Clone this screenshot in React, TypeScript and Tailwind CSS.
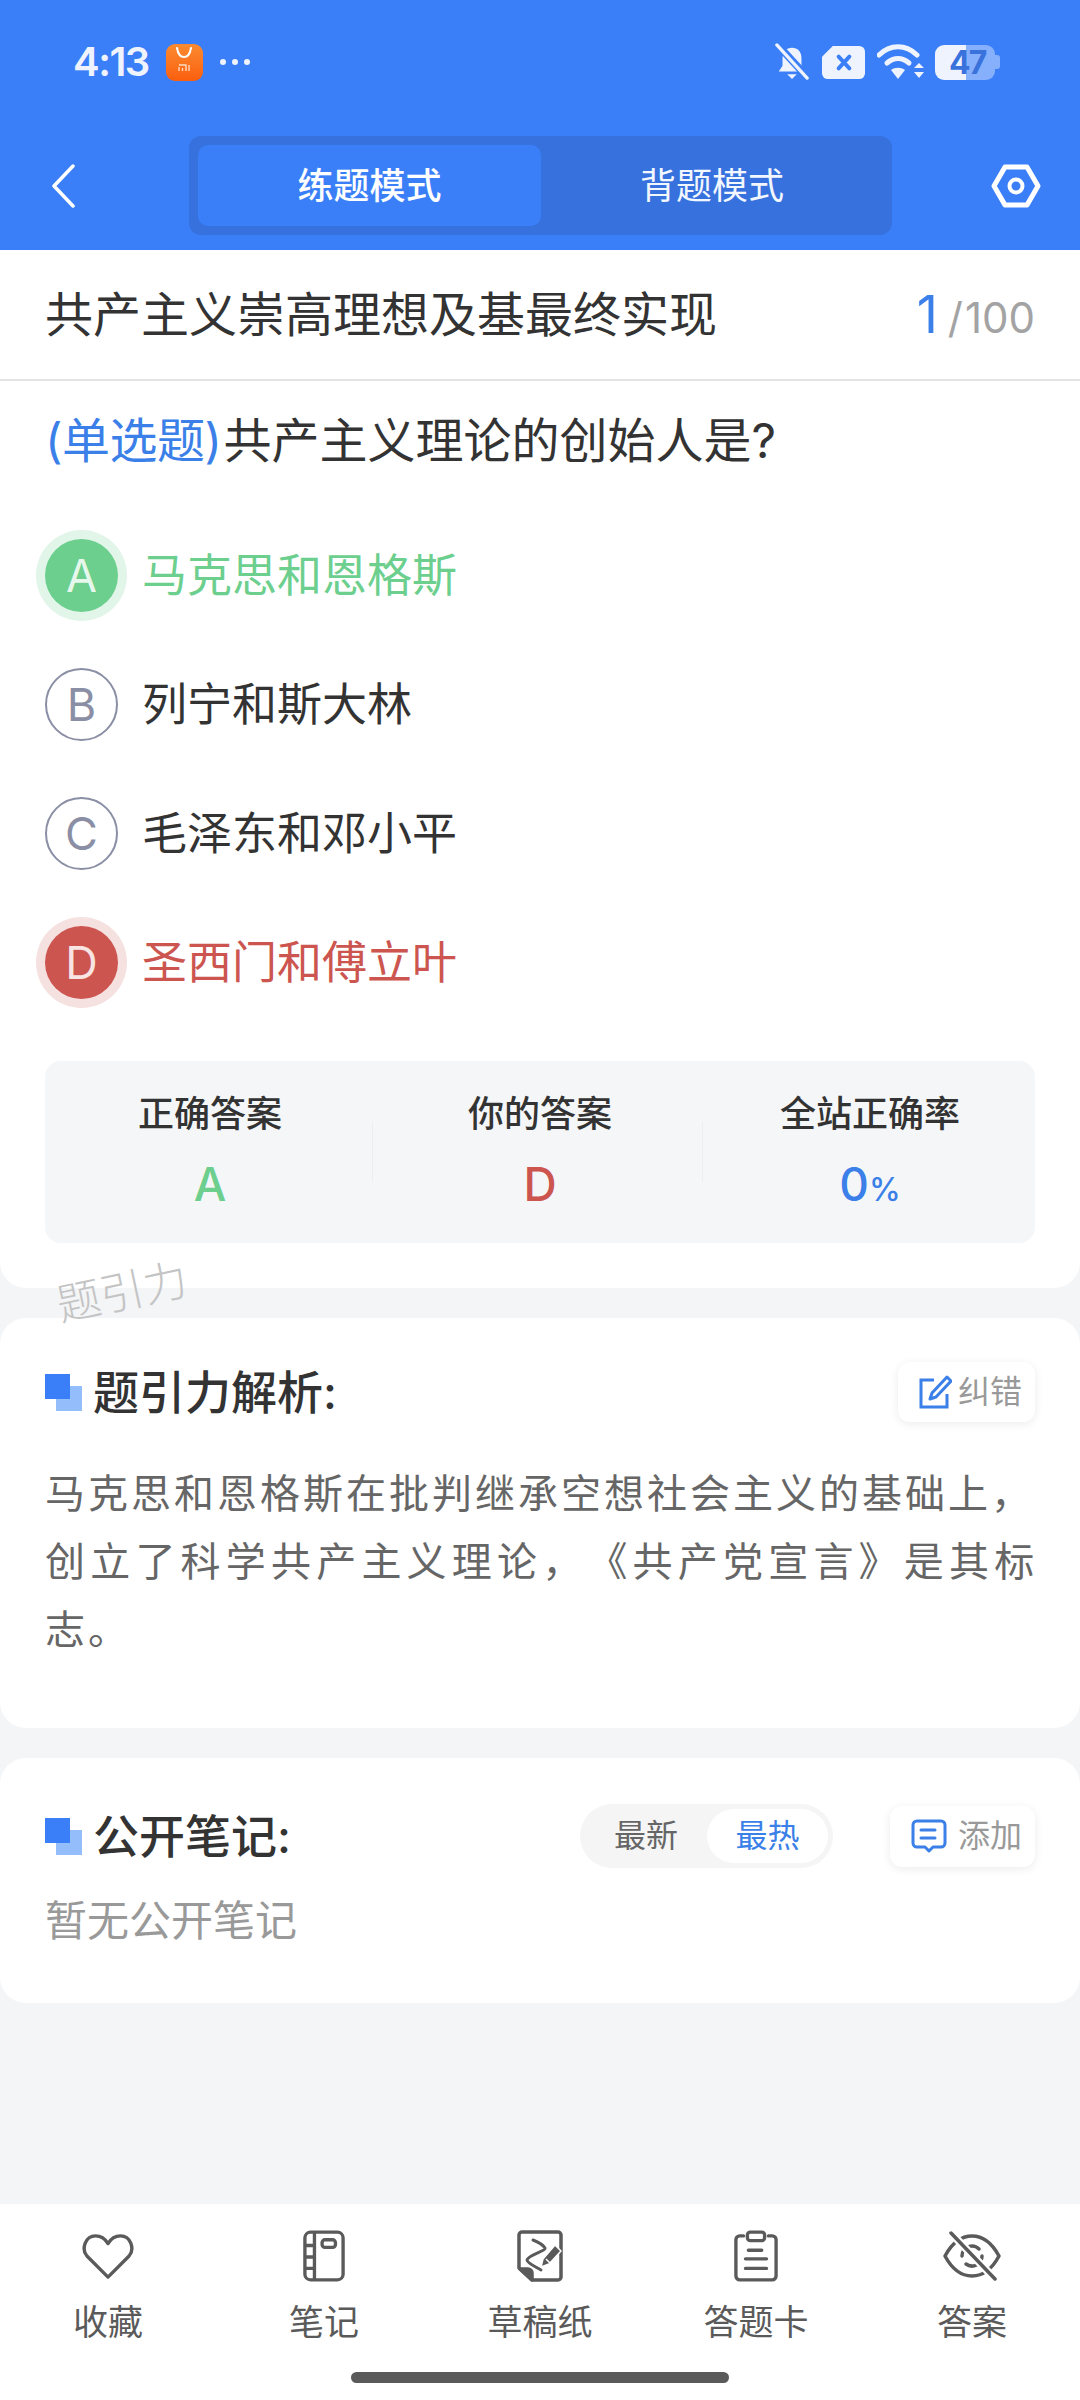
import React from 'react';

const font = "font-['Inter','Noto_Sans_CJK_SC',sans-serif]";

const SectionMark = () => (
  <div className="relative w-[37px] h-[37px] shrink-0">
    <div className="absolute left-[11px] top-[12px] w-[26px] h-[25px] bg-[#93bdfb]" />
    <div className="absolute left-0 top-0 w-[25px] h-[25px] bg-[#3b7ff8]" />
  </div>
);

const Option = ({ letter, text, state }: { letter: string; text: string; state?: 'right' | 'wrong' }) => {
  const circle =
    state === 'right'
      ? 'bg-[#6ccf8e] text-[#e6f7ec] ring-[9px] ring-[#e2f5e9]'
      : state === 'wrong'
        ? 'bg-[#cc5550] text-[#f8e4e3] ring-[9px] ring-[#f5e1e0]'
        : 'border-2 border-[#8b8fa5] text-[#8b8fa5]';
  const label = state === 'right' ? 'text-[#6ccf8e]' : state === 'wrong' ? 'text-[#cc5550]' : 'text-[#333333]';
  return (
    <div className="flex items-center h-[129px]">
      <div className={`w-[73px] h-[73px] rounded-full flex items-center justify-center text-[45px] font-normal ${circle}`}>
        {letter}
      </div>
      <span className={`ml-[24px] text-[45px] leading-none ${label}`}>{text}</span>
    </div>
  );
};

const Stat = ({ label, children, divider }: { label: string; children: React.ReactNode; divider?: boolean }) => (
  <div className="relative flex-1 flex flex-col items-center">
    <span className="text-[36px] leading-[44px] font-medium text-[#333333]">{label}</span>
    <span className="mt-[26px] h-[44px] leading-[44px] font-medium">{children}</span>
    {divider && <div className="absolute right-[2px] top-[30px] h-[60px] w-px bg-[#eceef1]" />}
  </div>
);

const NavItem = ({ icon, label }: { icon: React.ReactNode; label: string }) => (
  <div className="flex-1 flex flex-col items-center">
    <div className="h-[52px] flex items-center justify-center">{icon}</div>
    <span className="mt-[18px] text-[35px] leading-[44px] text-[#5a5a5a]">{label}</span>
  </div>
);

export default function App() {
  return (
    <div className={`${font} w-[1080px] h-[2400px] flex flex-col bg-[#f4f5f7] overflow-hidden`}>
      {/* Header */}
      <header className="h-[250px] shrink-0 bg-[#3b7ff8]">
        <div className="h-[124px] flex items-center pl-[73px] pr-[80px]">
          <span className="text-[40px] font-semibold text-[#eef3fe] tracking-[-1.500px]">4:13</span>
          <div className="ml-[17px] w-[37px] h-[37px] rounded-[9px] bg-gradient-to-b from-[#fb8a2e] to-[#fb5e0c] flex flex-col items-center">
            <svg width="26" height="14" viewBox="0 0 26 14" fill="none" className="mt-[3px]">
              <path d="M6 1c1 6 4 9 7 9s6-3 7-9" stroke="#fff" strokeWidth="2" strokeLinecap="round" />
            </svg>
            <svg width="12" height="8" viewBox="0 0 12 8" fill="none" className="mt-[3px]">
              <path d="M1 1h7v6M4.500 4v3M1 3v4M11 1v6" stroke="#fde0c8" strokeWidth="1.300" />
            </svg>
          </div>
          <div className="ml-[17px] flex gap-[6px]">
            <div className="w-[6px] h-[6px] rounded-full bg-[#eef3fe]" />
            <div className="w-[6px] h-[6px] rounded-full bg-[#eef3fe]" />
            <div className="w-[6px] h-[6px] rounded-full bg-[#eef3fe]" />
          </div>
          <div className="flex-1" />
          <svg width="36" height="38" viewBox="0 0 38 38" fill="#eef3fe">
            <path d="M19 4c6 0 10 4 10 11v8l4 6H5l4-6v-8c0-7 4-11 10-11z" />
            <path d="M14 32h10l-5 5z" />
            <path d="M3 0l34 37" stroke="#3b7ff8" strokeWidth="8" />
            <path d="M3 1l32 35" stroke="#eef3fe" strokeWidth="3.500" strokeLinecap="round" />
          </svg>
          <svg width="43" height="35" viewBox="0 0 44 34" className="ml-[12px]">
            <path d="M11 0h27a6 6 0 0 1 6 6v22a6 6 0 0 1-6 6H6a6 6 0 0 1-6-6V11z" fill="#eef3fe" />
            <path d="M17 11l11 12M28 11L17 23" stroke="#3b7ff8" strokeWidth="4" strokeLinecap="round" />
          </svg>
          <svg width="48" height="36" viewBox="0 0 48 36" fill="none" className="ml-[12px]">
            <path d="M2 11c11-11 27-11 38 0" stroke="#eef3fe" strokeWidth="5" strokeLinecap="round" />
            <path d="M10 19c7-6 15-6 22 0" stroke="#eef3fe" strokeWidth="5" strokeLinecap="round" />
            <path d="M14 26c4-3 10-3 14 0l-7 9z" fill="#eef3fe" />
            <path d="M37 24l5-5 5 5zM37 28l5 6 5-6z" fill="#eef3fe" />
          </svg>
          <div className="relative ml-[10px] w-[65px] h-[35px] flex">
            <div className="w-[31px] h-full rounded-l-[9px] bg-[#eef3fe]" />
            <div className="w-[29px] h-full rounded-r-[9px] bg-[#86b0fb]" />
            <div className="w-[5px] h-[14px] mt-[10px] rounded-r-[3px] bg-[#86b0fb]" />
            <span className="absolute left-[14px] top-0 text-[32px] leading-[35px] font-bold tracking-[-2px] text-[#3a72dc]">47</span>
          </div>
        </div>

        <div className="mt-[12px] flex items-center">
          <div className="w-[189px] pl-[51px]">
            <svg width="24" height="44" viewBox="0 0 24 44" fill="none">
              <path d="M22 2L3 22l19 20" stroke="#fff" strokeWidth="3.500" strokeLinecap="round" strokeLinejoin="round" />
            </svg>
          </div>
          <div className="w-[703px] h-[99px] rounded-[12px] bg-[#3671dd] p-[9px] flex">
            <div className="w-[343px] rounded-[10px] bg-[#3b7ff8] flex items-center justify-center text-[36px] font-medium text-white">
              练题模式
            </div>
            <div className="flex-1 flex items-center justify-center text-[36px] text-[#f2f6fe]">背题模式</div>
          </div>
          <div className="flex-1 pl-[99px]">
            <svg width="50" height="44" viewBox="0 0 50 44" fill="none">
              <path d="M14 3h22l11 19-11 19H14L3 22z" stroke="#fff" strokeWidth="5" strokeLinejoin="round" />
              <circle cx="25" cy="22" r="6.500" stroke="#fff" strokeWidth="4" />
            </svg>
          </div>
        </div>
      </header>

      {/* Question card */}
      <section className="relative bg-white rounded-b-[26px] h-[1038px] shrink-0">
        <div className="h-[131px] border-b-2 border-[#e4e4e4] px-[45px] flex items-center justify-between">
          <h1 className="text-[48px] font-normal text-[#333333] whitespace-nowrap">共产主义崇高理想及基最终实现</h1>
          <div className="flex items-baseline">
            <span className="text-[52px] text-[#3b7fe8]">1</span>
            <span className="ml-[10px] mr-[2px] text-[42px] text-[#a3a3a3]">/</span>
            <span className="text-[42px] text-[#a3a3a3]">100</span>
          </div>
        </div>
        <p className="mt-[30px] px-[45px] text-[48px] leading-[60px] text-[#333333] whitespace-nowrap">
          <span className="text-[#3b7fe8] tracking-[-0.500px]">(单选题)</span>
          <span className="ml-[2px]">共产主义理论的创始人是?</span>
        </p>
        <div className="mt-[40px] px-[45px]">
          <Option letter="A" text="马克思和恩格斯" state="right" />
          <Option letter="B" text="列宁和斯大林" />
          <Option letter="C" text="毛泽东和邓小平" />
          <Option letter="D" text="圣西门和傅立叶" state="wrong" />
        </div>
        <div className="mx-[45px] mt-[34px] h-[182px] rounded-[16px] bg-[#f5f6f8] flex pt-[31px]">
          <Stat label="正确答案" divider>
            <span className="text-[46px] text-[#6ccf8e]">A</span>
          </Stat>
          <Stat label="你的答案" divider>
            <span className="text-[46px] text-[#cc5550]">D</span>
          </Stat>
          <Stat label="全站正确率">
            <span className="text-[46px] text-[#3b7fe8]">0</span>
            <span className="text-[32px] text-[#3b7fe8]">%</span>
          </Stat>
        </div>
      </section>

      {/* Analysis */}
      <section className="relative mt-[30px] h-[410px] shrink-0 bg-white rounded-[26px] px-[45px] pt-[44px]">
        <div className="flex items-center justify-between h-[60px]">
          <div className="flex items-center">
            <SectionMark />
            <span className="ml-[11px] text-[46px] font-medium text-[#333333]">题引力解析:</span>
          </div>
          <div className="w-[137px] h-[60px] rounded-[12px] bg-white shadow-[0_2px_10px_rgba(0,0,0,0.08)] flex items-center pl-[20px] gap-[6px]">
            <svg width="34" height="34" viewBox="0 0 34 34" fill="none" stroke="#3b7fe8" strokeWidth="3">
              <path d="M16 5H3v27h26V19" />
              <path d="M29 2l4 4-15 16-6 2 2-6z" strokeLinejoin="round" />
            </svg>
            <span className="text-[32px] text-[#999999]">纠错</span>
          </div>
        </div>
        <div className="mt-[38px] text-[40px] leading-[68px] text-[#666666] tracking-[3px] [text-spacing-trim:space-all]">
          <p className="whitespace-nowrap">马克思和恩格斯在批判继承空想社会主义的基础上，</p>
          <p className="whitespace-nowrap tracking-[5.200px]">创立了科学共产主义理论，《共产党宣言》是其标</p>
          <p className="whitespace-nowrap">志。</p>
        </div>
      </section>

      {/* Notes */}
      <section className="mt-[30px] h-[245px] shrink-0 bg-white rounded-[26px] px-[45px] pt-[46px]">
        <div className="flex items-center h-[64px]">
          <SectionMark />
          <span className="ml-[11px] text-[46px] font-medium text-[#333333]">公开笔记:</span>
          <div className="flex-1" />
          <div className="w-[253px] h-[64px] rounded-full bg-[#f5f5f5] p-[5px] flex items-center">
            <span className="w-[122px] text-center text-[32px] text-[#666666]">最新</span>
            <span className="flex-1 h-full rounded-full bg-white flex items-center justify-center text-[32px] text-[#3b7fe8]">最热</span>
          </div>
          <div className="ml-[57px] w-[145px] h-[61px] rounded-[12px] bg-white shadow-[0_2px_10px_rgba(0,0,0,0.08)] flex items-center pl-[21px] gap-[11px]">
            <svg width="36" height="34" viewBox="0 0 36 34" fill="none" stroke="#3b7fe8" strokeWidth="3" strokeLinecap="round" strokeLinejoin="round">
              <path d="M6 2h24a4 4 0 0 1 4 4v18a4 4 0 0 1-4 4h-8l-4 4-4-4H6a4 4 0 0 1-4-4V6a4 4 0 0 1 4-4z" />
              <path d="M10 11h14M10 19h14" />
            </svg>
            <span className="text-[32px] text-[#999999]">添加</span>
          </div>
        </div>
        <p className="mt-[27px] text-[42px] leading-[52px] text-[#999999]">暂无公开笔记</p>
      </section>

      <div className="flex-1" />

      {/* Bottom bar */}
      <nav className="relative h-[196px] shrink-0 bg-white pt-[26px]">
        <div className="flex">
          <NavItem
            label="收藏"
            icon={
              <svg width="52" height="46" viewBox="0 0 54 48" fill="none" stroke="#5a5a5a" strokeWidth="3.500" strokeLinejoin="round">
                <path d="M27 46L5 24C-1 17 3 3 14 3c6 0 10 3 13 8 3-5 7-8 13-8 11 0 15 14 9 21z" />
              </svg>
            }
          />
          <NavItem
            label="笔记"
            icon={
              <svg width="42" height="52" viewBox="0 0 44 54" fill="none" stroke="#5a5a5a" strokeWidth="3.500">
                <rect x="2" y="2" width="40" height="50" rx="6" />
                <path d="M12 2v50M2 16h10M2 28h10M2 40h10" />
                <rect x="20" y="10" width="14" height="8" rx="3" />
              </svg>
            }
          />
          <NavItem
            label="草稿纸"
            icon={
              <svg width="46" height="52" viewBox="0 0 46 52" fill="none" stroke="#5a5a5a" strokeWidth="3.500" strokeLinejoin="round">
                <path d="M5 2h36a3 3 0 0 1 3 3v42a3 3 0 0 1-3 3H15L2 38V5a3 3 0 0 1 3-3z" />
                <path d="M3 39h8a4 4 0 0 1 4 4v7z" fill="#5a5a5a" />
                <path d="M16 10c5 2 10 5 12 8 1 3-17 7-18 12 0 3 9 7 14 10" strokeWidth="3" strokeLinecap="round" />
                <path d="M38 15l6 6-12 13-8 3 2-8z" fill="#5a5a5a" stroke="#ffffff" strokeWidth="1.500" />
                <path d="M29 29l5 5" stroke="#ffffff" strokeWidth="1.500" />
              </svg>
            }
          />
          <NavItem
            label="答题卡"
            icon={
              <svg width="44" height="52" viewBox="0 0 46 54" fill="none" stroke="#5a5a5a" strokeWidth="3.500" strokeLinecap="round">
                <path d="M10 6H6a4 4 0 0 0-4 4v38a4 4 0 0 0 4 4h34a4 4 0 0 0 4-4V10a4 4 0 0 0-4-4h-4" />
                <rect x="14" y="2" width="18" height="9" rx="3" />
                <path d="M15 21h14M12 30h22M12 40h22" />
              </svg>
            }
          />
          <NavItem
            label="答案"
            icon={
              <svg width="58" height="50" viewBox="0 0 58 50" fill="none" stroke="#5a5a5a" strokeWidth="3.500" strokeLinecap="round" strokeLinejoin="round">
                <path d="M2 25C9 12 18 5 29 5s20 7 27 20c-7 13-16 20-27 20S9 38 2 25z" />
                <path d="M19 25a10 10 0 0 1 17-7M39 25a10 10 0 0 1-16 8" />
                <path d="M8 2l44 46" stroke="#ffffff" strokeWidth="8" />
                <path d="M8 2l44 46" />
              </svg>
            }
          />
        </div>
        <div className="mx-auto mt-[28px] w-[378px] h-[11px] rounded-full bg-[#5a5a5a]" />
      </nav>

      {/* Watermark */}
      <div className="absolute left-[56px] top-[1264px] -rotate-[12deg] text-[44px] leading-[56px] text-[#c4c4c4] font-light">题引力</div>
    </div>
  );
}
